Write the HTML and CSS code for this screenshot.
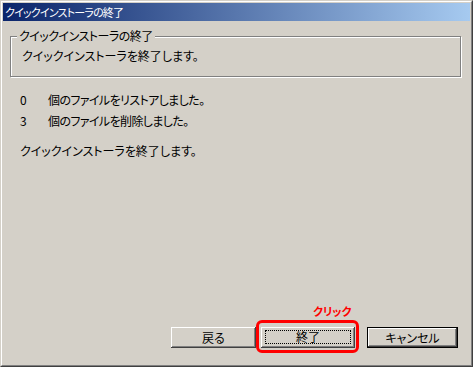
FILE: index.html
```html
<!DOCTYPE html>
<html lang="ja">
<head>
<meta charset="utf-8">
<title>クイックインストーラの終了</title>
<link rel="stylesheet" href="styles.css">
</head>
<body>
<div class="window">
  <div class="frame">
    <div class="titlebar"><span class="title">クイックインストーラの終了</span></div>
    <div class="client">
      <fieldset class="group">
        <legend class="legend">クイックインストーラの終了</legend>
        <div class="group-text">クイックインストーラを終了します。</div>
      </fieldset>
      <div class="messages">
        <div class="msg"><span class="count">0</span><span class="msg-text">個のファイルをリストアしました。</span></div>
        <div class="msg"><span class="count">3</span><span class="msg-text">個のファイルを削除しました。</span></div>
        <div class="msg final">クイックインストーラを終了します。</div>
      </div>
      <div class="buttons">
        <button class="btn btn-back">戻る</button>
        <div class="highlight-wrap">
          <button class="btn btn-finish"><span class="focus-ring">終了</span></button>
          <div class="callout">クリック</div>
          <div class="ring"></div>
        </div>
        <button class="btn btn-cancel">キャンセル</button>
      </div>
    </div>
  </div>
</div>
</body>
</html>
```
FILE: styles.css
```css
html, body {
  margin: 0;
  padding: 0;
  background: #d4d0c8;
}
body {
  font-family: "Noto Sans CJK JP", "Noto Sans", sans-serif;
  font-size: 12px;
  color: #000;
  font-feature-settings: "palt";
}
.window {
  width: 473px;
  height: 367px;
  box-sizing: border-box;
  border: 1px solid;
  border-color: #d4d0c8 #404040 #404040 #d4d0c8;
}
.frame {
  height: 100%;
  box-sizing: border-box;
  border: 1px solid;
  border-color: #fff #808080 #808080 #fff;
  padding: 1px;
  display: flex;
  flex-direction: column;
}
.titlebar {
  height: 18px;
  flex: none;
  background: linear-gradient(to right, #0a246a, #a6caf0);
  color: #fff;
  display: flex;
  align-items: center;
  padding-left: 2px;
  font-size: 11px;
  line-height: 14px;
  letter-spacing: -0.8px;
}
.client {
  flex: 1;
  display: flex;
  flex-direction: column;
  min-height: 0;
}
.group {
  margin: 8px 9px 0 7px;
  padding: 0 0 13px 6px;
  border: 1px solid #808080;
  box-shadow: inset 1px 1px 0 #fff, 1px 1px 0 #fff;
  min-width: 0;
}
.legend {
  padding: 0 2px;
  line-height: 14px;
  background: #d4d0c8;
  letter-spacing: -0.5px;
}
.group-text {
  padding: 6px 0 0 5px;
  line-height: 14px;
}
.messages {
  display: flex;
  flex-direction: column;
  gap: 7px;
  margin: 16px 0 0 17px;
}
.msg {
  display: flex;
  line-height: 14px;
}
.msg-text {
  letter-spacing: -0.6px;
}
.msg.final {
  margin-top: 9px;
}
.count {
  width: 28px;
  flex: none;
}
.buttons {
  margin-top: auto;
  display: flex;
  justify-content: flex-end;
  align-items: flex-start;
  padding: 0 12px 16px 0;
}
.btn {
  box-sizing: border-box;
  height: 21px;
  border: none;
  margin: 0;
  padding: 0;
  background: #d4d0c8;
  font: inherit;
  color: #000;
  line-height: 14px;
  box-shadow: inset -1px -1px 0 #404040, inset 1px 1px 0 #fff, inset -2px -2px 0 #808080, inset 2px 2px 0 #d4d0c8;
}
.btn-back {
  width: 85px;
  margin-right: 5px;
}
.highlight-wrap {
  position: relative;
  margin-right: 12px;
}
.btn-finish {
  width: 94px;
  display: flex;
  padding: 3px 4px 4px 4px;
}
.focus-ring {
  flex: 1;
  border: 1px dotted #000;
  display: flex;
  align-items: center;
  justify-content: center;
}
.btn-cancel {
  width: 91px;
  border: 1px solid #000;
}
.ring {
  position: absolute;
  left: -5px;
  top: -7px;
  width: 103px;
  height: 33px;
  box-sizing: border-box;
  border: 3px solid #ff0000;
  border-radius: 6px;
}
.callout {
  position: absolute;
  left: 52px;
  top: -23px;
  color: #ff0000;
  font-weight: bold;
  font-size: 11px;
  line-height: 14px;
  white-space: nowrap;
}
```
